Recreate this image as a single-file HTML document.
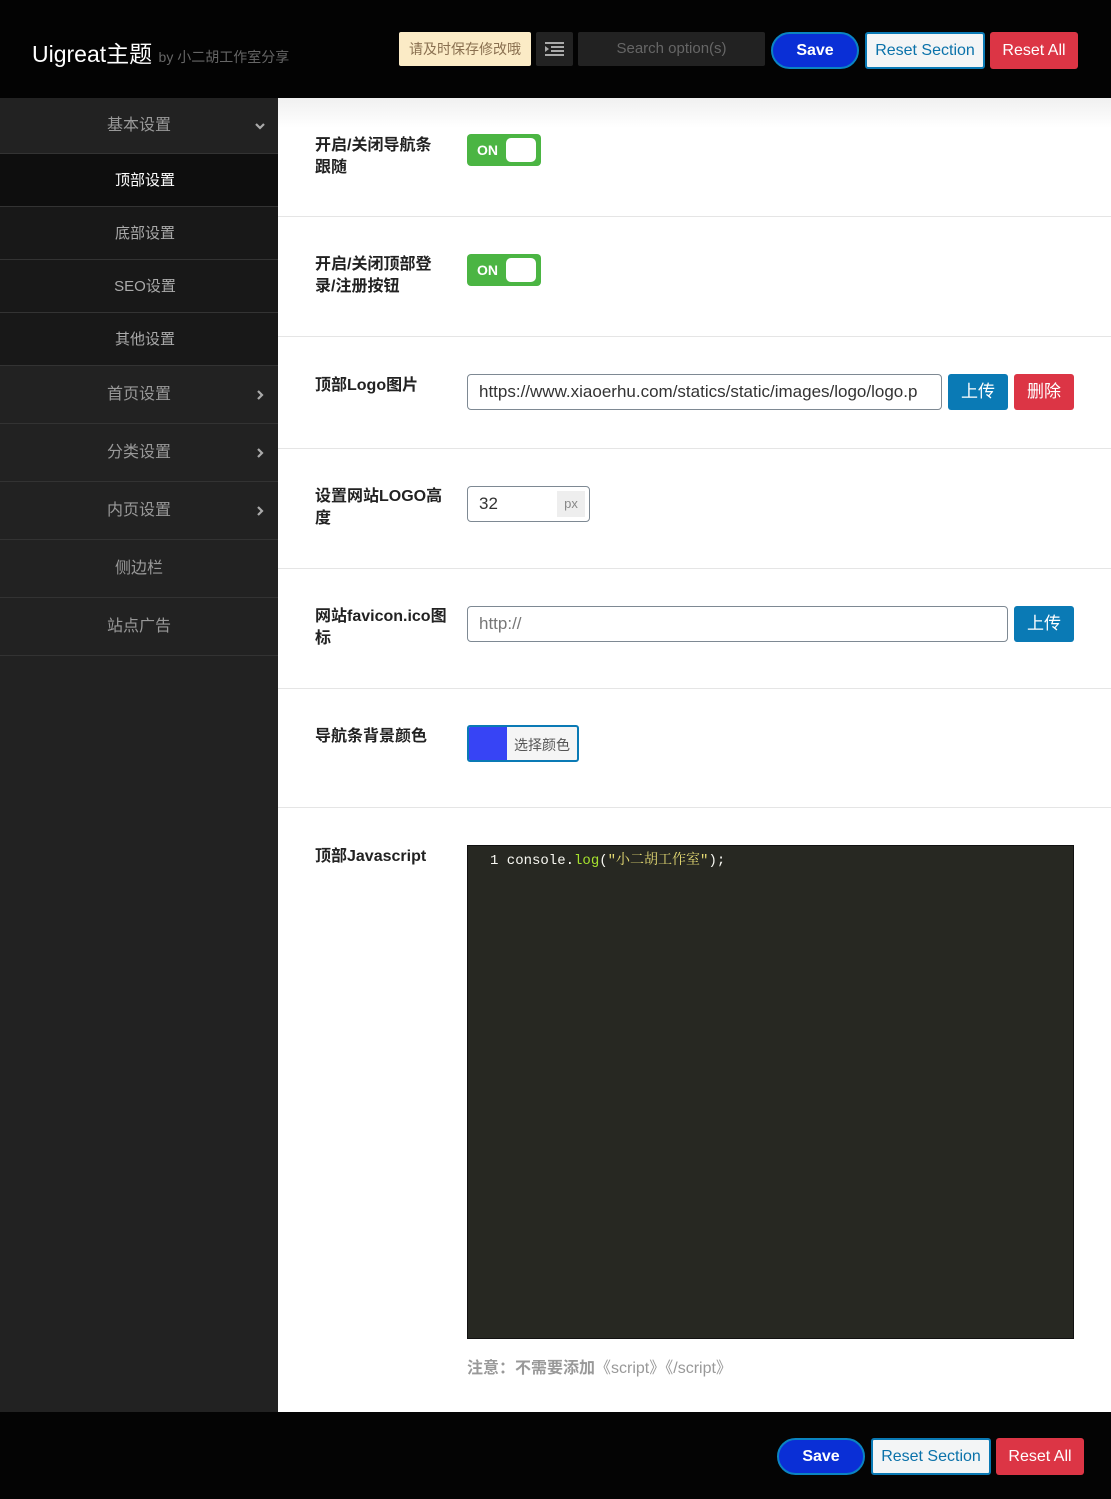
<!DOCTYPE html><html><head><meta charset="utf-8"><style>
*{box-sizing:border-box;margin:0;padding:0}
body{width:1111px;height:1499px;position:relative;background:#fff;font-family:"Liberation Sans","Noto Sans CJK SC",sans-serif;overflow:hidden}
.a{position:absolute}
.hd{left:0;top:0;width:1111px;height:98px;background:#030303}
.sb{left:0;top:98px;width:278px;height:1314px;background:#222}
.mi{position:absolute;left:0;width:278px;color:#999;font-size:16px;text-align:center;border-bottom:1px solid #333;padding-right:0}
.sub{background:#181818;color:#aaa;font-size:15px;padding-left:12px}
.arr{position:absolute;right:12px;top:50%;margin-top:-6px;width:12px;height:12px}
.lbl{left:315px;font-size:16px;font-weight:bold;color:#222;line-height:22px;white-space:nowrap}
.sep{left:278px;width:833px;height:1px;background:#e5e5e5}
.tg{left:467px;width:74px;height:32px;background:#4bb543;border-radius:4px;color:#fff;font-weight:bold;font-size:14px;line-height:32px;padding-left:10px}
.tg i{position:absolute;right:5px;top:4px;width:30px;height:24px;background:#fff;border-radius:5px}
.inp{border:1px solid #7e8993;border-radius:4px;height:36px;font-size:17px;color:#333;line-height:34px;padding-left:11px;background:#fff;overflow:hidden;white-space:nowrap}
.btn{color:#fff;font-size:17px;text-align:center;border-radius:3px}
.bs{background:#0a2fd6;border:2px solid #0a84c2;border-radius:20px;color:#fff;font-size:16px;text-align:center;font-weight:bold}
.br{background:#f3f5f6;border:2px solid #0a7ab5;color:#0a72aa;font-size:16px;text-align:center;border-radius:3px}
.ba{background:#dc3545;color:#fff;font-size:16px;text-align:center;border-radius:3px}
</style></head><body>
<div class="a hd"></div>
<div class="a" style="left:32px;top:35px;color:#fff;font-size:23px">Uigreat主题 <span style="font-size:14px;color:#666">by 小二胡工作室分享</span></div>
<div class="a" style="left:399px;top:32px;width:132px;height:34px;background:#fbebc6;border-radius:2px;color:#8a7050;font-size:14px;line-height:34px;text-align:center">请及时保存修改哦</div>
<div class="a" style="left:536px;top:32px;width:37px;height:34px;background:#222;border-radius:2px"><svg width="37" height="34"><g stroke="#aaa" stroke-width="2"><path d="M9 11h19M15 15h13M15 19h13M9 23h19"/></g><path d="M9 14l4 3-4 3z" fill="#aaa"/></svg></div>
<div class="a" style="left:578px;top:32px;width:187px;height:34px;background:#222;border-radius:2px;color:#666;font-size:15px;line-height:34px;text-align:center">Search option(s)</div>
<div class="a bs" style="left:771px;top:32px;width:88px;height:37px;line-height:33px">Save</div>
<div class="a br" style="left:865px;top:32px;width:120px;height:37px;line-height:33px">Reset Section</div>
<div class="a ba" style="left:990px;top:32px;width:88px;height:37px;line-height:37px">Reset All</div>

<div class="a sb"></div>
<div class="mi" style="top:98px;height:56px;line-height:56px">基本设置<svg class="arr" viewBox="0 0 12 12"><path d="M2 4l4 4 4-4" stroke="#aaa" stroke-width="2.2" fill="none"/></svg></div>
<div class="mi sub" style="top:154px;height:53px;line-height:53px;background:#0e0e0e;color:#fff">顶部设置</div>
<div class="a" style="left:272px;top:175px;width:0;height:0;border:6px solid transparent;border-right-color:#fff"></div>
<div class="mi sub" style="top:207px;height:53px;line-height:53px">底部设置</div>
<div class="mi sub" style="top:260px;height:53px;line-height:53px">SEO设置</div>
<div class="mi sub" style="top:313px;height:53px;line-height:53px">其他设置</div>
<div class="mi" style="top:366px;height:58px;line-height:58px">首页设置<svg class="arr" viewBox="0 0 12 12"><path d="M4 2l4 4-4 4" stroke="#aaa" stroke-width="2.2" fill="none"/></svg></div>
<div class="mi" style="top:424px;height:58px;line-height:58px">分类设置<svg class="arr" viewBox="0 0 12 12"><path d="M4 2l4 4-4 4" stroke="#aaa" stroke-width="2.2" fill="none"/></svg></div>
<div class="mi" style="top:482px;height:58px;line-height:58px">内页设置<svg class="arr" viewBox="0 0 12 12"><path d="M4 2l4 4-4 4" stroke="#aaa" stroke-width="2.2" fill="none"/></svg></div>
<div class="mi" style="top:540px;height:58px;line-height:58px">侧边栏</div>
<div class="mi" style="top:598px;height:58px;line-height:58px">站点广告</div>

<div class="a" style="left:278px;top:98px;width:833px;height:30px;background:linear-gradient(#f0f0f0,#fff)"></div>
<div class="a lbl" style="top:135px">开启/关闭导航条<br>跟随</div>
<div class="a tg" style="top:134px">ON<i></i></div>
<div class="a sep" style="top:216px"></div>
<div class="a lbl" style="top:254px">开启/关闭顶部登<br>录/注册按钮</div>
<div class="a tg" style="top:254px">ON<i></i></div>
<div class="a sep" style="top:336px"></div>
<div class="a lbl" style="top:375px">顶部Logo图片</div>
<div class="a inp" style="left:467px;top:374px;width:475px">https://www.xiaoerhu.com/statics/static/images/logo/logo.p</div>
<div class="a btn" style="left:948px;top:374px;width:60px;height:36px;line-height:36px;background:#0a7ab5">上传</div>
<div class="a btn" style="left:1014px;top:374px;width:60px;height:36px;line-height:36px;background:#dc3545">删除</div>
<div class="a sep" style="top:448px"></div>
<div class="a lbl" style="top:486px">设置网站LOGO高<br>度</div>
<div class="a inp" style="left:467px;top:486px;width:123px">32<span class="a" style="right:4px;top:4px;width:28px;height:26px;background:#eee;font-size:13px;color:#888;line-height:26px;text-align:center;padding:0">px</span></div>
<div class="a sep" style="top:568px"></div>
<div class="a lbl" style="top:606px">网站favicon.ico图<br>标</div>
<div class="a inp" style="left:467px;top:606px;width:541px;color:#777">http://</div>
<div class="a btn" style="left:1014px;top:606px;width:60px;height:36px;line-height:36px;background:#0a7ab5">上传</div>
<div class="a sep" style="top:688px"></div>
<div class="a lbl" style="top:726px">导航条背景颜色</div>
<div class="a" style="left:467px;top:725px;width:112px;height:37px;border:2px solid #0a7ab5;border-radius:3px;background:#f5f5f5;overflow:hidden"><div class="a" style="left:0;top:0;width:38px;height:35px;background:#3744f5"></div><span class="a" style="left:45px;top:8px;font-size:14px;color:#555">选择颜色</span></div>
<div class="a sep" style="top:807px"></div>
<div class="a lbl" style="top:846px">顶部Javascript</div>
<div class="a" style="left:467px;top:845px;width:607px;height:494px;background:#272822;border:1px solid #111;font-family:'Liberation Mono','Noto Serif CJK SC',monospace;font-size:14px;line-height:30px;color:#f8f8f2;padding-left:22px">1 console.<span style="color:#a6e22e">log</span>(<span style="color:#e6db74">"小二胡工作室"</span>);</div>
<div class="a" style="left:467px;top:1354px;font-size:16px;color:#999"><b>注意：不需要添加</b>《script》《/script》</div>
<div class="a" style="left:0;top:1412px;width:1111px;height:87px;background:#040404"></div>
<div class="a bs" style="left:777px;top:1438px;width:88px;height:37px;line-height:33px">Save</div>
<div class="a br" style="left:871px;top:1438px;width:120px;height:37px;line-height:33px">Reset Section</div>
<div class="a ba" style="left:996px;top:1438px;width:88px;height:37px;line-height:37px">Reset All</div>
</body></html>
